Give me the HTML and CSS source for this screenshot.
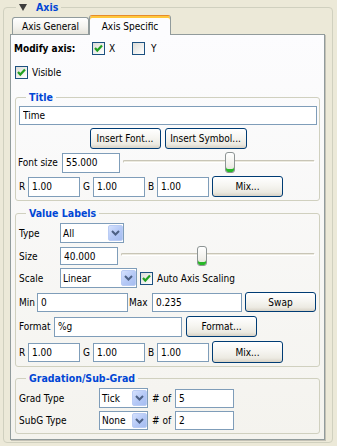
FILE: index.html
```html
<!DOCTYPE html>
<html>
<head>
<meta charset="utf-8">
<link rel="stylesheet" href="styles.css">
</head>
<body>
<fieldset class="outer">
  <legend class="outer-legend"><svg class="tri" width="8" height="7" viewBox="0 0 8 7"><polygon points="0,0 8,0 4,7" fill="#3D3D3D"/></svg>Axis</legend>
  <div class="tabs">
    <div class="tab">Axis General</div>
    <div class="tab active">Axis Specific</div>
  </div>
  <div class="pane">
    <div class="row r-modify">
      <span class="modify-label">Modify axis:</span>
      <span class="chk chk-x"><span class="box"><svg width="11" height="11" viewBox="0 0 11 11"><polyline points="2,5 4.3,7.6 9,2.6" fill="none" stroke="#21A121" stroke-width="2.2"/></svg></span><span class="chk-text">X</span></span>
      <span class="chk chk-y"><span class="box"></span><span class="chk-text gap6">Y</span></span>
    </div>
    <div class="row r-visible">
      <span class="chk"><span class="box"><svg width="11" height="11" viewBox="0 0 11 11"><polyline points="2,5 4.3,7.6 9,2.6" fill="none" stroke="#21A121" stroke-width="2.2"/></svg></span><span class="chk-text">Visible</span></span>
    </div>

    <fieldset class="group g-title">
      <legend>Title</legend>
      <div class="row r-h19 mt2"><input class="field f-title h19" type="text" value="Time"></div>
      <div class="row r-h21 mt3 center">
        <button class="btn b-font">Insert Font...</button>
        <button class="btn b-symbol">Insert Symbol...</button>
      </div>
      <div class="row r-h21 mt3">
        <span class="lbl l-fontsize">Font size</span>
        <input class="field w58 h20" type="text" value="55.000">
        <div class="slider s-font"><div class="track"></div><div class="handle" style="left:102px"></div></div>
      </div>
      <div class="row r-h21 mt3">
        <span class="lbl l-r">R</span><input class="field w52 h20" type="text" value="1.00">
        <span class="lbl l-g">G</span><input class="field w52 h20" type="text" value="1.00">
        <span class="lbl l-b">B</span><input class="field w52 h20" type="text" value="1.00">
        <button class="btn b-mix">Mix...</button>
      </div>
    </fieldset>

    <fieldset class="group g-value">
      <legend>Value Labels</legend>
      <div class="row r-h20 mt3">
        <span class="lbl l-41">Type</span>
        <div class="combo w64 h20"><span class="combo-text">All</span><span class="combo-btn"><svg width="9" height="6" viewBox="0 0 9 6"><polyline points="1,1 4.5,4.5 8,1" fill="none" stroke="#4D6185" stroke-width="2"/></svg></span></div>
      </div>
      <div class="row r-h20 mt3">
        <span class="lbl l-41">Size</span>
        <input class="field w58 h18" type="text" value="40.000">
        <div class="slider s-size"><div class="track"></div><div class="handle" style="left:76px"></div></div>
      </div>
      <div class="row r-h20 mt2">
        <span class="lbl l-41">Scale</span>
        <div class="combo w77 h20"><span class="combo-text">Linear</span><span class="combo-btn"><svg width="9" height="6" viewBox="0 0 9 6"><polyline points="1,1 4.5,4.5 8,1" fill="none" stroke="#4D6185" stroke-width="2"/></svg></span></div>
        <span class="chk chk-auto"><span class="box"><svg width="11" height="11" viewBox="0 0 11 11"><polyline points="2,5 4.3,7.6 9,2.6" fill="none" stroke="#21A121" stroke-width="2.2"/></svg></span><span class="chk-text">Auto Axis Scaling</span></span>
      </div>
      <div class="row r-h20 mt4">
        <span class="lbl l-min">Min</span>
        <input class="field w91 h19" type="text" value="0">
        <span class="lbl l-max">Max</span>
        <input class="field w90 h19" type="text" value="0.235">
        <button class="btn b-swap h20">Swap</button>
      </div>
      <div class="row r-h21 mt4">
        <span class="lbl l-format">Format</span>
        <input class="field w128 h20" type="text" value="%g">
        <button class="btn b-format">Format...</button>
      </div>
      <div class="row r-h22 mt4">
        <span class="lbl l-r">R</span><input class="field w52 h19" type="text" value="1.00">
        <span class="lbl l-g">G</span><input class="field w52 h19" type="text" value="1.00">
        <span class="lbl l-b">B</span><input class="field w52 h19" type="text" value="1.00">
        <button class="btn b-mix h22">Mix...</button>
      </div>
    </fieldset>

    <fieldset class="group g-grad">
      <legend>Gradation/Sub-Grad</legend>
      <div class="row r-h20 mt3">
        <span class="lbl l-80">Grad Type</span>
        <div class="combo w49 h20"><span class="combo-text">Tick</span><span class="combo-btn"><svg width="9" height="6" viewBox="0 0 9 6"><polyline points="1,1 4.5,4.5 8,1" fill="none" stroke="#4D6185" stroke-width="2"/></svg></span></div>
        <span class="lbl l-of">#&nbsp;of</span>
        <input class="field w59 h19" type="text" value="5">
      </div>
      <div class="row r-h19 mt3">
        <span class="lbl l-80">SubG Type</span>
        <div class="combo w49 h19"><span class="combo-text">None</span><span class="combo-btn"><svg width="9" height="6" viewBox="0 0 9 6"><polyline points="1,1 4.5,4.5 8,1" fill="none" stroke="#4D6185" stroke-width="2"/></svg></span></div>
        <span class="lbl l-of">#&nbsp;of</span>
        <input class="field w59 h19" type="text" value="2">
      </div>
    </fieldset>
  </div>
</fieldset>
</body>
</html>
```

FILE: styles.css
```css
* { box-sizing: border-box; }
html, body { margin: 0; padding: 0; }
body {
  width: 337px;
  height: 446px;
  overflow: hidden;
  background: #ECE9D8;
  font-family: "DejaVu Sans Condensed", "Liberation Sans", sans-serif;
  font-size: 10px;
  color: #000;
}

/* outer group */
.outer {
  margin: 0 4px 0 3px;
  padding: 1px 7px 2px 6px;
  border: 1px solid #D0D0BF;
  border-radius: 4px;
  min-width: 0;
}
.outer-legend {
  margin-left: 6px;
  padding: 0 3px;
  height: 14px;
  line-height: 14px;
  font-weight: bold;
  font-size: 10.5px;
  color: #0046D5;
}
.tri { vertical-align: 0px; margin-right: 9px; }

/* tabs */
.tabs {
  display: flex;
  align-items: flex-end;
  height: 19px;
  padding-left: 2px;
  position: relative;
  z-index: 1;
}
.tab {
  width: 77px;
  height: 17px;
  border: 1px solid #919B9C;
  border-bottom: 0;
  border-radius: 3px 3px 0 0;
  background: linear-gradient(#FFFFFF, #F4F3EF 55%, #E6E4DB);
  display: flex;
  align-items: center;
  justify-content: center;
  padding-top: 1px;
}
.tab.active {
  width: 82px;
  height: 20px;
  margin-bottom: -1px;
  background: #FCFCFE;
  border-top: 1px solid #E68B2C;
  box-shadow: inset 0 2px 0 #FFC73C;
  padding-top: 1px;
}

.pane {
  height: 406px;
  border: 1px solid #919B9C;
  box-shadow: 1px 1px 0 #C3C1B5;
  background: linear-gradient(#FCFCFE, #F4F3EE);
  padding: 0 4px;
  display: flex;
  flex-direction: column;
}

.row { display: flex; align-items: center; flex: none; }
.mt2 { margin-top: 2px; }
.mt3 { margin-top: 3px; }
.mt4 { margin-top: 4px; }
.r-h19 { height: 19px; }
.r-h20 { height: 20px; }
.r-h21 { height: 21px; }
.r-h22 { height: 22px; }
.center { justify-content: center; }

.r-modify { margin-top: 3px; height: 20px; margin-left: -1px; }
.r-visible { margin-top: 4px; height: 20px; }
.modify-label { font-weight: bold; width: 78px; }

/* checkbox */
.chk { display: flex; align-items: center; }
.box {
  width: 13px;
  height: 13px;
  border: 1px solid #1C5180;
  background: linear-gradient(135deg, #DCDCD7, #FFFFFF);
  display: flex;
}
.chk-text { margin-left: 4px; }
.chk-x { width: 40px; }
.gap6 { margin-left: 6px; }
.chk-auto { margin-left: 3px; }

/* group boxes */
.group {
  margin: 0;
  padding: 0 2px 3px 3px;
  border: 1px solid #D0D0BF;
  border-radius: 3px;
  min-width: 0;
  flex: none;
}
.group legend {
  margin-left: 7px;
  padding: 0 3px;
  height: 14px;
  line-height: 14px;
  font-weight: bold;
  font-size: 10.5px;
  color: #0046D5;
}
.g-title { margin-top: 8px; }
.g-value { margin-top: 5px; }
.g-grad { margin-top: 4px; }

/* inputs */
.field {
  font: inherit;
  color: #000;
  border: 1px solid #7F9DB9;
  background: #FFFFFF;
  padding: 0 0 0 3px;
  margin: 0;
  outline: none;
  flex: none;
}
.h18 { height: 18px; }
.h19 { height: 19px; }
.h20 { height: 20px; }
.h22 { height: 22px; }
.f-title { width: 298px; }
.w52 { width: 52px; }
.w58 { width: 58px; }
.w59 { width: 59px; }
.w64 { width: 64px; }
.w77 { width: 77px; }
.w49 { width: 49px; }
.w90 { width: 90px; }
.w91 { width: 91px; }
.w128 { width: 128px; }

.lbl { flex: none; }
.l-fontsize { width: 44px; margin-left: -1px; }
.l-r { width: 9px; }
.l-g { width: 10px; margin-left: 3px; }
.l-b { width: 9px; margin-left: 3px; }
.l-41 { width: 41px; }
.l-min { width: 18px; }
.l-max { width: 24px; padding-left: 1px; }
.l-format { width: 35px; }
.l-80 { width: 80px; }
.l-of { width: 23px; margin-left: 4px; }

/* buttons */
.btn {
  font: inherit;
  color: #000;
  height: 21px;
  border: 1px solid #003C74;
  border-radius: 3px;
  background: linear-gradient(#FFFFFF, #F6F5F1 45%, #ECEAE2 80%, #D8D2C6);
  padding: 0;
  margin: 0;
  flex: none;
}
.btn.h20 { height: 20px; }
.btn.h22 { height: 22px; }
.b-font { width: 71px; }
.b-symbol { width: 82px; margin-left: 4px; }
.b-mix { width: 71px; margin-left: 3px; }
.b-swap { width: 71px; margin-left: 3px; }
.b-format { width: 71px; margin-left: 4px; }

/* combo */
.combo {
  display: flex;
  align-items: stretch;
  border: 1px solid #7F9DB9;
  background: #FFFFFF;
  padding-left: 2px;
  flex: none;
}
.combo-text { flex: 1; display: flex; align-items: center; }
.combo-btn {
  width: 15px;
  margin: 1px 0 1px 0;
  border: 1px solid #BACCF4;
  border-radius: 2px;
  background: linear-gradient(135deg, #D5E1FD, #B4C8F6 55%, #A6BDF0);
  display: flex;
  align-items: center;
  justify-content: center;
}

/* slider */
.slider { position: relative; flex: 1; height: 100%; }
.s-font { margin-left: 3px; }
.s-size { margin-left: 3px; }
.track {
  margin-top: 8px;
  margin-right: 2px;
  height: 3px;
  border: 1px solid #C8C5B6;
  border-bottom-color: #FFFFFF;
  border-right-color: #FFFFFF;
  border-radius: 2px;
  background: #ECEAE0;
}
.s-size .track { margin-top: 7px; }
.handle {
  position: absolute;
  top: 0;
  width: 10px;
  height: 100%;
  border: 1px solid #8D9494;
  border-radius: 3px;
  background: linear-gradient(#FFFFFF, #F2F1EC 60%, #E2E0D6);
  box-shadow: inset 0 -3px 0 #27B827;
}
```
